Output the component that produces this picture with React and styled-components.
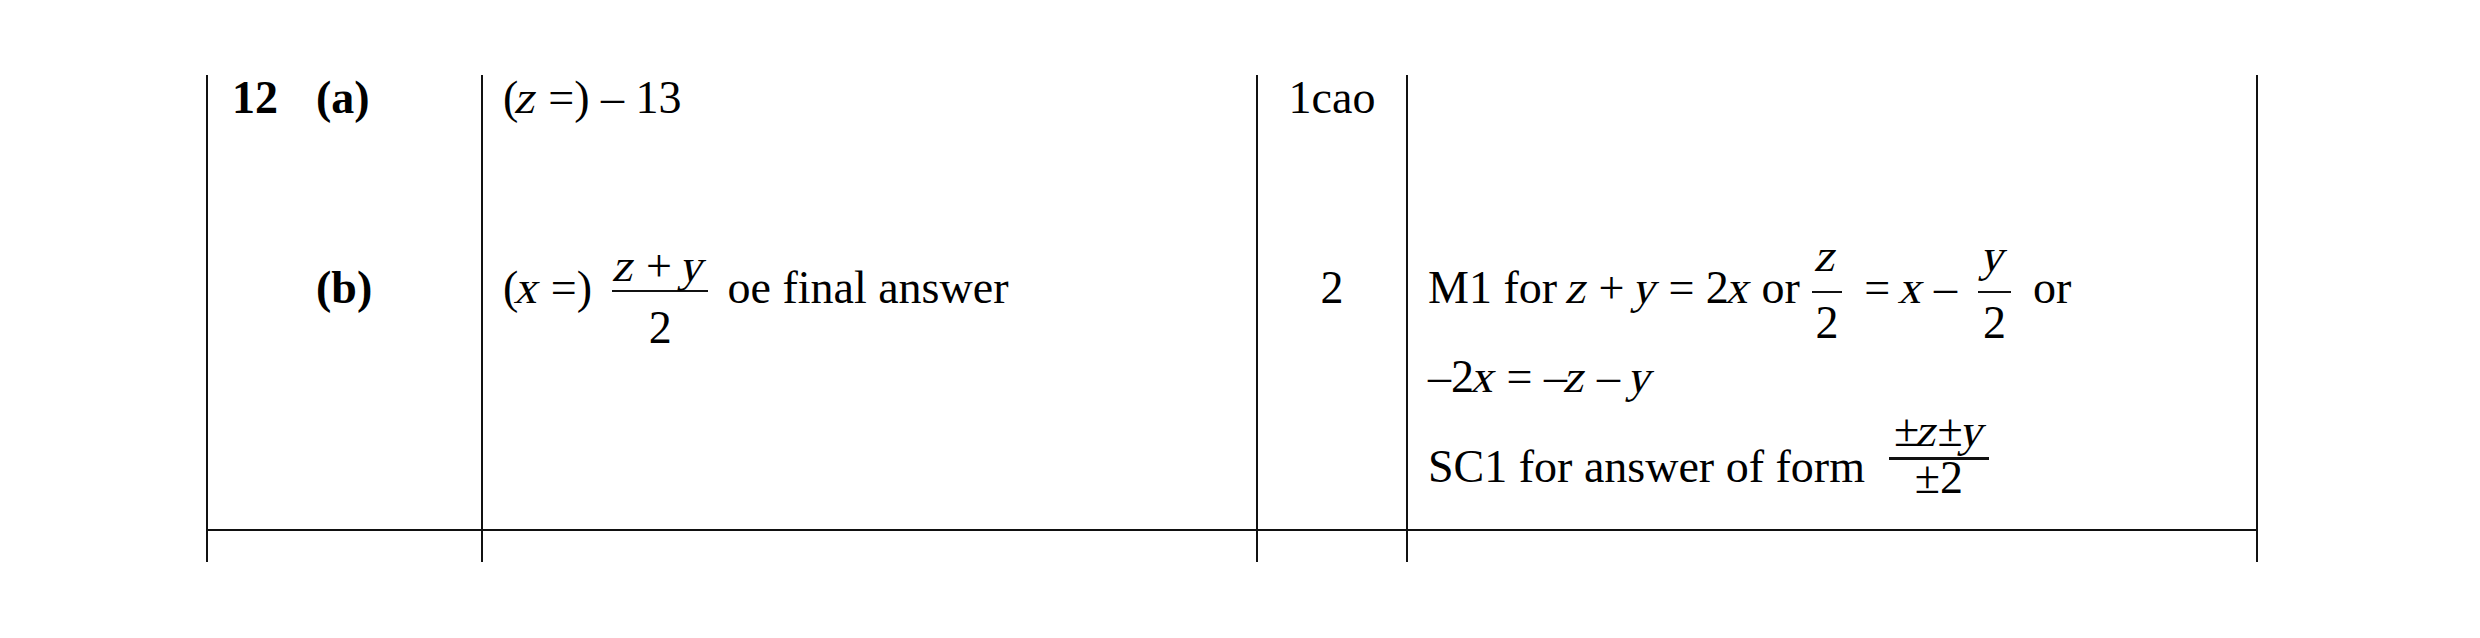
import React from 'react'
import styled, { createGlobalStyle } from 'styled-components'

const GlobalStyle = createGlobalStyle`
  html, body {
    margin: 0;
    background: #fff;
  }
  body {
    font-family: "Liberation Serif", "Times New Roman", serif;
    color: #000;
  }
`

const Page = styled.div`
  width: 2480px;
  height: 638px;
  box-sizing: border-box;
  padding: 75px 0 0 206px;
  overflow: hidden;
`

const Table = styled.table`
  width: 2052px;
  table-layout: fixed;
  border-collapse: separate;
  border-spacing: 0;
  font-size: 46px;
  line-height: 46px;
`

const Row = styled.tr`
  height: ${props => props.h}px;
`

const Cell = styled.td`
  box-sizing: border-box;
  width: ${props => props.w ? props.w + 'px' : 'auto'};
  padding: 0 0 0 ${props => props.pl || 0}px;
  border-left: 2px solid #111;
  border-right: ${props => props.last ? '2px solid #111' : 'none'};
  border-bottom: ${props => props.bottom ? '2px solid #111' : 'none'};
  vertical-align: baseline;
  text-align: ${props => props.center ? 'center' : 'left'};
  white-space: nowrap;
`

const QNum = styled.b`
  display: inline-block;
  width: 84px;
`

const Part = styled.b``

// variables: the serif italic face is not installed, so slant the roman one
// (and pull it in a little, the italic letters are narrower)
const V = styled.span`
  display: inline-block;
  transform: skewX(-13deg);
  margin: 0 -1px;
`

const Line = styled.div`
  margin-top: ${props => props.mt || 0}px;
`

const Frac = styled.span`
  display: inline-flex;
  flex-direction: column;
  align-items: center;
  vertical-align: ${props => props.raise}px;
  margin: 0 ${props => props.mr}px 0 ${props => props.ml}px;
  line-height: ${props => props.lh}px;
`

const Top = styled.span`
  padding: 0 ${props => props.pad}px;
  margin-bottom: ${props => props.gap}px;
`

const Bar = styled.span`
  align-self: stretch;
  height: ${props => props.t}px;
  background: #111;
`

const Bottom = styled.span`
  margin-top: ${props => props.gap}px;
`

const App = () => {
  return (
    <Page>
      <GlobalStyle />
      <Table>
        <tbody>
          <Row h={158}>
            <Cell w={275} pl={24}><QNum>12</QNum><Part>(a)</Part></Cell>
            <Cell w={775} pl={20}>(<V>z</V> =) – 13</Cell>
            <Cell w={150} center>1cao</Cell>
            <Cell w={852} pl={20} last></Cell>
          </Row>
          <Row h={298}>
            <Cell pl={24} bottom><QNum /><Part>(b)</Part></Cell>
            <Cell pl={20} bottom>
              (<V>x</V> =)
              <Frac raise={21.5} lh={46} ml={20} mr={19}>
                <Top pad={4} gap={0.5}><V>z</V> + <V>y</V></Top>
                <Bar t={2} />
                <Bottom gap={13.5}>2</Bottom>
              </Frac>
              oe final answer
            </Cell>
            <Cell center bottom>2</Cell>
            <Cell pl={20} last bottom>
              <Line>
                M1 for <V>z</V> + <V>y</V> = 2<V>x</V> or
                <Frac raise={31.5} lh={46} ml={12} mr={22}>
                  <Top pad={6} gap={11.5}><V>z</V></Top>
                  <Bar t={2} />
                  <Bottom gap={7.5}>2</Bottom>
                </Frac>
                = <V>x</V> –
                <Frac raise={31.5} lh={46} ml={21} mr={22}>
                  <Top pad={6} gap={11.5}><V>y</V></Top>
                  <Bar t={2} />
                  <Bottom gap={7.5}>2</Bottom>
                </Frac>
                or
              </Line>
              <Line mt={8}>–2<V>x</V> = –<V>z</V> – <V>y</V></Line>
              <Line mt={13}>
                SC1 for answer of form
                <Frac raise={35.5} lh={36} ml={24} mr={0}>
                  <Top pad={5} gap={7.5}>±<V>z</V>±<V>y</V></Top>
                  <Bar t={3} />
                  <Bottom gap={0.5}>±2</Bottom>
                </Frac>
              </Line>
            </Cell>
          </Row>
          <Row h={31}>
            <Cell />
            <Cell />
            <Cell />
            <Cell last />
          </Row>
        </tbody>
      </Table>
    </Page>
  )
}

export default App
